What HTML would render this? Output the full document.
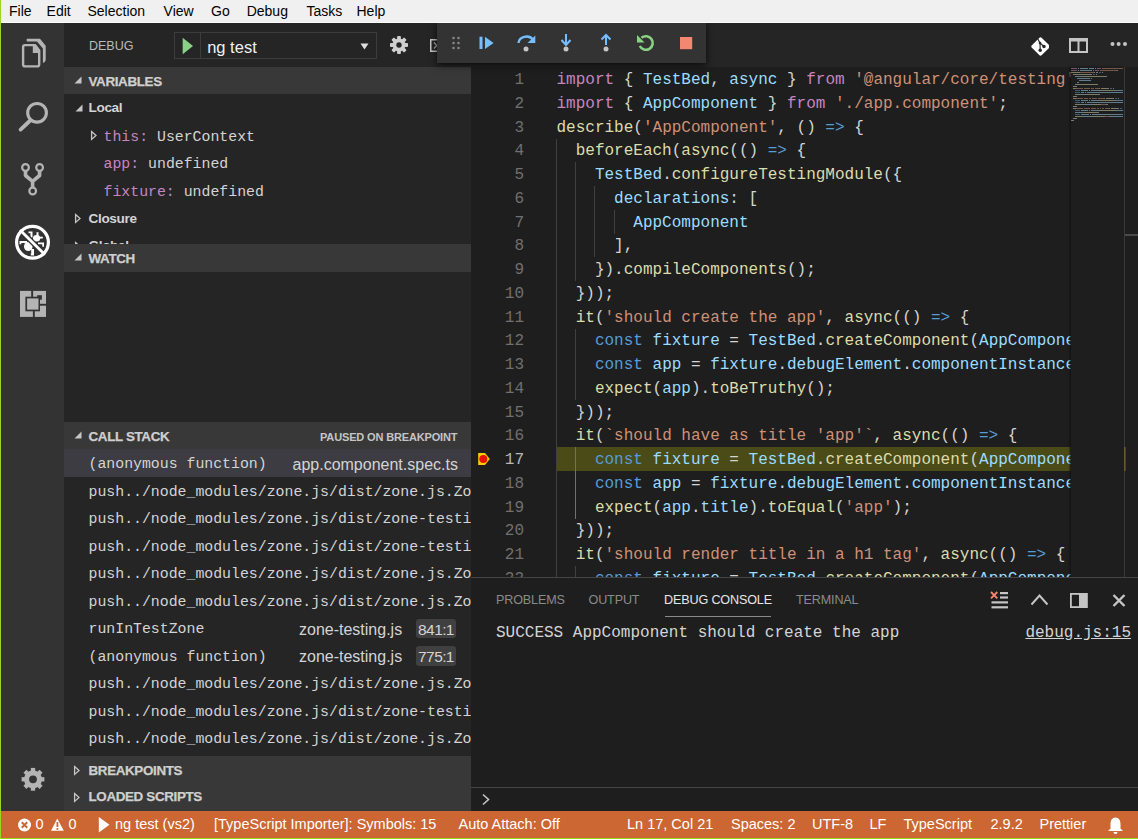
<!DOCTYPE html>
<html><head><meta charset="utf-8">
<style>
*{margin:0;padding:0;box-sizing:border-box}
html,body{width:1138px;height:839px;overflow:hidden;background:#1e1e1e;font-family:"Liberation Sans",sans-serif}
.a{position:absolute}
#menubar{left:0;top:0;width:1138px;height:22px;background:#f0f0f0;border-left:1px solid #97d71c}
#menuline{left:0;top:22px;width:1138px;height:1px;background:#fcfcfc}
.mi{position:absolute;top:3px;font-size:14px;color:#000;white-space:nowrap}
#actbar{left:0;top:23px;width:64px;height:788px;background:#333333;border-left:1px solid #97d71c}
#sidebar{left:64px;top:23px;width:407px;height:788px;background:#252526;overflow:hidden}
.sh{position:absolute;left:0;width:407px;height:27px;background:#383838}
.sht{position:absolute;left:24.5px;top:7px;font-size:13.4px;font-weight:bold;color:#cfcfcf;letter-spacing:-0.35px;-webkit-text-stroke:0.25px #cfcfcf;white-space:nowrap}
.tri{position:absolute}
.row{position:absolute;left:0;width:407px;height:27.5px}
.mono{font-family:"Liberation Mono",monospace;font-size:14.85px;white-space:nowrap}
.sans{font-family:"Liberation Sans",sans-serif;white-space:nowrap}
#titlearea{left:471px;top:23px;width:667px;height:44px;background:#252526}
#editor{left:471px;top:67px;width:667px;height:511px;background:#1e1e1e;overflow:hidden}
.cl{position:absolute;left:556.5px;height:23.75px;line-height:23.75px;padding-top:1.8px;font-family:"Liberation Mono",monospace;font-size:16px;white-space:pre}
.ln{position:absolute;left:471px;width:53px;text-align:right;height:23.75px;line-height:23.75px;font-family:"Liberation Mono",monospace;font-size:16px;color:#707070;padding-top:1.8px}
.ln.act{color:#b8b8b8}
.ig{position:absolute;width:1px;height:23.75px}
.mm{position:absolute;height:1px;opacity:0.5}
#panel{left:471px;top:577px;width:667px;height:234px;background:#1e1e1e;border-top:1px solid #454545}
.pt{position:absolute;top:15px;font-size:12.6px;color:#8b8b8b;white-space:nowrap;letter-spacing:-0.15px}
#status{left:0;top:811px;width:1138px;height:27px;background:#cc6633;color:#fff}
#bottomline{left:0;top:838px;width:1138px;height:1px;background:#97d71c}
.st{position:absolute;top:5px;font-size:14.5px;color:#fff;white-space:nowrap}
#dbgclip{left:400px;top:23px;width:350px;height:60px;overflow:hidden}
#dbgtb{left:37px;top:0px;width:269px;height:40px;background:#333333;box-shadow:0 2px 7px rgba(0,0,0,0.75)}
</style></head><body>
<!-- menu -->
<div id="menubar" class="a">
<span class="mi" style="left:8px">File</span>
<span class="mi" style="left:45.6px">Edit</span>
<span class="mi" style="left:86.5px">Selection</span>
<span class="mi" style="left:162.6px">View</span>
<span class="mi" style="left:210px">Go</span>
<span class="mi" style="left:245.7px">Debug</span>
<span class="mi" style="left:305.4px">Tasks</span>
<span class="mi" style="left:355.5px">Help</span>
</div>
<div id="menuline" class="a"></div>

<!-- activity bar -->
<div id="actbar" class="a">
<svg class="a" style="left:-1px;top:0" width="64" height="788" viewBox="0 23 64 788">
 <!-- files -->
 <g fill="none" stroke="#b4b4b4" stroke-width="2.4" stroke-linejoin="round">
  <path d="M23.1 47 Q23.1 45.1 25 45.1 H35 L39.2 50.5 V64.5 Q39.2 66.4 37.3 66.4 H25 Q23.1 66.4 23.1 64.5 Z"/>
 </g>
 <path d="M32.8 45 H35.5 L39.6 50 V53 H32.8 Z" fill="#b4b4b4"/>
 <path d="M27 38.75 Q26.2 39.5 26.9 41.5 H37 L42.9 48.5 V63 Q45.7 62 45.7 60 V45.8 L40 38.75 Z" fill="#b4b4b4"/>
 <!-- search -->
 <circle cx="37.05" cy="112.8" r="9.35" fill="none" stroke="#b4b4b4" stroke-width="3.1"/>
 <line x1="30.2" y1="120.5" x2="20.6" y2="129.6" stroke="#b4b4b4" stroke-width="3.8" stroke-linecap="round"/>
 <!-- git -->
 <g fill="none" stroke="#b4b4b4" stroke-width="2.2">
  <circle cx="25.5" cy="167.5" r="3.35"/>
  <circle cx="39.6" cy="167.5" r="3.35"/>
  <circle cx="32.7" cy="191" r="3.35"/>
 </g>
 <path d="M25.5 170.5 V175.5 L32.6 181.3 V188 M39.6 170.5 V175.5 L32.6 181.3" fill="none" stroke="#b4b4b4" stroke-width="3.6" stroke-linejoin="round"/>
 <!-- debug (active) -->
 <g fill="#fff">
  <ellipse cx="36.6" cy="238.3" rx="3.6" ry="3.3"/>
  <path d="M28.5 231.5 H32.5 V237.5 H30.5 V233.2 H28.5 Z"/>
  <rect x="36.5" y="232.2" width="2" height="5"/>
  <rect x="38" y="236.7" width="4.8" height="1.8"/>
  <path d="M38 242.5 H44 V246.8 H42.3 V244.3 H38 Z"/>
  <ellipse cx="28.3" cy="246.5" rx="4.3" ry="4.5"/>
  <path d="M19.5 241 H27 V243 H21.3 V244.2 H19.5 Z"/>
  <path d="M31.2 249 H34 V255.5 H30.8 V253.5 H31.2 Z"/>
 </g>
 <line x1="20" y1="230" x2="45" y2="254.8" stroke="#333333" stroke-width="5.4"/>
 <line x1="20" y1="230" x2="45" y2="254.8" stroke="#ffffff" stroke-width="2.8"/>
 <circle cx="32.5" cy="242.3" r="15.9" fill="none" stroke="#ffffff" stroke-width="3.2"/>
 <!-- extensions -->
 <rect x="20" y="290.9" width="26" height="26" fill="#b4b4b4"/>
 <g fill="#333333">
  <rect x="25.4" y="296.7" width="14.6" height="14.6"/>
  <rect x="31.2" y="290.5" width="1.9" height="6.5"/>
  <rect x="40" y="303.8" width="6.5" height="1.9"/>
  <rect x="32.9" y="311" width="1.9" height="6.5"/>
  <rect x="37.2" y="295.2" width="4.7" height="4.5"/>
 </g>
 <rect x="27.1" y="298.4" width="11.4" height="11.2" fill="#b4b4b4"/>
 <!-- gear -->
 <g transform="translate(33 779.3)" fill="#b4b4b4">
  <circle r="9" />
  <g>
   <rect x="-2.15" y="-11.4" width="4.3" height="5" />
   <rect x="-2.15" y="6.4" width="4.3" height="5" />
   <rect x="-11.4" y="-2.15" width="5" height="4.3" />
   <rect x="6.4" y="-2.15" width="5" height="4.3" />
  </g>
  <g transform="rotate(45)">
   <rect x="-2.15" y="-11.4" width="4.3" height="5" />
   <rect x="-2.15" y="6.4" width="4.3" height="5" />
   <rect x="-11.4" y="-2.15" width="5" height="4.3" />
   <rect x="6.4" y="-2.15" width="5" height="4.3" />
  </g>
  <circle r="3.9" fill="#333333"/>
 </g>
</svg>
</div>

<!-- sidebar -->
<div id="sidebar" class="a">
 <div class="a sans" style="left:25px;top:16px;font-size:12.5px;color:#bbbbbb">DEBUG</div>
 <div class="a" style="left:109.5px;top:8.5px;width:203px;height:27px;border:1px solid #3c3c3c;background:#252526"></div>
 <div class="a" style="left:136px;top:10px;width:1px;height:24.5px;background:#3c3c3c"></div>
 <svg class="a" style="left:118px;top:14px" width="12" height="18"><path d="M0.7 0.8 L11 8.9 L0.7 17.2 Z" fill="#89d185"/></svg>
 <div class="a sans" style="left:143.2px;top:14.5px;font-size:16.5px;color:#f0f0f0">ng test</div>
 <svg class="a" style="left:295.5px;top:20px" width="9" height="7"><path d="M0.5 0.5 H8.5 L4.5 6.5 Z" fill="#e0e0e0"/></svg>
 <!-- gear -->
 <svg class="a" style="left:323px;top:10px" width="24" height="24" viewBox="-12 -12 24 24">
  <g fill="#cfcfcf" transform="scale(0.9)">
   <circle r="7.2"/>
   <rect x="-2.1" y="-10" width="4.2" height="4.5" rx="1"/><rect x="-2.1" y="5.5" width="4.2" height="4.5" rx="1"/><rect x="-10" y="-2.1" width="4.5" height="4.2" rx="1"/><rect x="5.5" y="-2.1" width="4.5" height="4.2" rx="1"/>
   <g transform="rotate(45)"><rect x="-2.1" y="-10" width="4.2" height="4.5" rx="1"/><rect x="-2.1" y="5.5" width="4.2" height="4.5" rx="1"/><rect x="-10" y="-2.1" width="4.5" height="4.2" rx="1"/><rect x="5.5" y="-2.1" width="4.5" height="4.2" rx="1"/></g>
   <circle r="3" fill="#252526"/>
  </g>
 </svg>
 <svg class="a" style="left:365.5px;top:16px" width="12" height="14"><rect x="0.75" y="0.75" width="14" height="11.5" fill="none" stroke="#c5c5c5" stroke-width="1.5"/><path d="M4 3.5 l2.8 3 l-2.8 3" fill="none" stroke="#b0b0b0" stroke-width="1.2"/></svg>

 <!-- VARIABLES -->
 <div class="sh" style="top:44px">
  <svg class="tri" style="left:9.5px;top:9px" width="8" height="8"><path d="M7.5 0.5 V7.5 H0.5 Z" fill="#c5c5c5"/></svg>
  <div class="sht">VARIABLES</div>
 </div>
 <div class="row" style="top:71px">
  <svg class="tri" style="left:11px;top:10px" width="8" height="8"><path d="M7.5 0.5 V7.5 H0.5 Z" fill="#c5c5c5"/></svg>
  <div class="a sans" style="left:24.5px;top:6px;font-size:13.6px;font-weight:bold;color:#d4d4d4;letter-spacing:-0.35px">Local</div>
 </div>
 <div class="row" style="top:99px">
  <svg class="tri" style="left:26px;top:8px" width="8" height="11"><path d="M1.6 1.6 L6 5.5 L1.6 9.4 Z" fill="none" stroke="#c5c5c5" stroke-width="1.3"/></svg>
  <div class="a mono" style="left:39.5px;top:6.5px"><span style="color:#c586c0">this:</span> <span style="color:#d4d4d4">UserContext</span></div>
 </div>
 <div class="row" style="top:126.5px">
  <div class="a mono" style="left:39.5px;top:6.5px"><span style="color:#c586c0">app:</span> <span style="color:#d4d4d4">undefined</span></div>
 </div>
 <div class="row" style="top:154px">
  <div class="a mono" style="left:39.5px;top:6.5px"><span style="color:#c586c0">fixture:</span> <span style="color:#d4d4d4">undefined</span></div>
 </div>
 <div class="row" style="top:181.5px">
  <svg class="tri" style="left:9.8px;top:8.5px" width="8" height="11"><path d="M1.6 1.6 L6 5.5 L1.6 9.4 Z" fill="none" stroke="#c5c5c5" stroke-width="1.3"/></svg>
  <div class="a sans" style="left:24.5px;top:6px;font-size:13.6px;font-weight:bold;color:#d4d4d4;letter-spacing:-0.35px">Closure</div>
 </div>
 <div class="row" style="top:209px">
  <svg class="tri" style="left:9.8px;top:8.5px" width="8" height="11"><path d="M1.6 1.6 L6 5.5 L1.6 9.4 Z" fill="none" stroke="#c5c5c5" stroke-width="1.3"/></svg>
  <div class="a sans" style="left:24.5px;top:6px;font-size:13.6px;font-weight:bold;color:#d4d4d4;letter-spacing:-0.35px">Global</div>
 </div>
 <!-- WATCH -->
 <div class="sh" style="top:221px;height:28px">
  <svg class="tri" style="left:9.5px;top:9px" width="8" height="8"><path d="M7.5 0.5 V7.5 H0.5 Z" fill="#c5c5c5"/></svg>
  <div class="sht">WATCH</div>
 </div>
 <!-- CALL STACK -->
 <div class="sh" style="top:399px">
  <svg class="tri" style="left:9.5px;top:9px" width="8" height="8"><path d="M7.5 0.5 V7.5 H0.5 Z" fill="#c5c5c5"/></svg>
  <div class="sht">CALL STACK</div>
  <div class="a sans" style="left:256px;top:9px;font-size:11px;font-weight:bold;color:#c5c5c5;letter-spacing:-0.15px">PAUSED ON BREAKPOINT</div>
 </div>
 <div class="row" style="top:426px;background:#3c3c42">
  <div class="a mono" style="left:24.5px;top:7px;color:#d4d4d4">(anonymous function)</div>
  <div class="a sans" style="left:228.5px;top:6.5px;font-size:16px;color:#d4d4d4">app.component.spec.ts</div>
 </div>
 <div class="row" style="top:453.5px"><div class="a mono" style="left:24.5px;top:7px;color:#d4d4d4">push../node_modules/zone.js/dist/zone.js.ZoneDelegate.invoke</div></div>
 <div class="row" style="top:481px"><div class="a mono" style="left:24.5px;top:7px;color:#d4d4d4">push../node_modules/zone.js/dist/zone-testing.js.ProxyZoneSpec.onInvoke</div></div>
 <div class="row" style="top:508.5px"><div class="a mono" style="left:24.5px;top:7px;color:#d4d4d4">push../node_modules/zone.js/dist/zone-testing.js.AsyncTestZoneSpec.onInvoke</div></div>
 <div class="row" style="top:536px"><div class="a mono" style="left:24.5px;top:7px;color:#d4d4d4">push../node_modules/zone.js/dist/zone.js.ZoneDelegate.invoke</div></div>
 <div class="row" style="top:563.5px"><div class="a mono" style="left:24.5px;top:7px;color:#d4d4d4">push../node_modules/zone.js/dist/zone.js.Zone.run</div></div>
 <div class="row" style="top:591px">
  <div class="a mono" style="left:24.5px;top:7px;color:#d4d4d4">runInTestZone</div>
  <div class="a sans" style="left:235px;top:6.5px;font-size:16px;color:#d4d4d4">zone-testing.js</div>
  <div class="a sans" style="left:352px;top:4.5px;width:40px;height:19.7px;line-height:21px;text-align:center;background:#404040;border-radius:3px;font-size:15.5px;letter-spacing:-0.6px;color:#d4d4d4">841:1</div>
 </div>
 <div class="row" style="top:618.5px">
  <div class="a mono" style="left:24.5px;top:7px;color:#d4d4d4">(anonymous function)</div>
  <div class="a sans" style="left:235px;top:6.5px;font-size:16px;color:#d4d4d4">zone-testing.js</div>
  <div class="a sans" style="left:352px;top:4.5px;width:40px;height:19.7px;line-height:21px;text-align:center;background:#404040;border-radius:3px;font-size:15.5px;letter-spacing:-0.6px;color:#d4d4d4">775:1</div>
 </div>
 <div class="row" style="top:646px"><div class="a mono" style="left:24.5px;top:7px;color:#d4d4d4">push../node_modules/zone.js/dist/zone.js.ZoneDelegate.invoke</div></div>
 <div class="row" style="top:673.5px"><div class="a mono" style="left:24.5px;top:7px;color:#d4d4d4">push../node_modules/zone.js/dist/zone-testing.js.ProxyZoneSpec.onInvoke</div></div>
 <div class="row" style="top:701px"><div class="a mono" style="left:24.5px;top:7px;color:#d4d4d4">push../node_modules/zone.js/dist/zone.js.ZoneDelegate.invoke</div></div>
 <!-- BREAKPOINTS -->
 <div class="sh" style="top:733px;height:28px">
  <svg class="tri" style="left:8.8px;top:8.5px" width="8" height="11"><path d="M1.6 1.6 L6 5.5 L1.6 9.4 Z" fill="none" stroke="#c5c5c5" stroke-width="1.3"/></svg>
  <div class="sht">BREAKPOINTS</div>
 </div>
 <div class="sh" style="top:760.5px;height:28px">
  <svg class="tri" style="left:8.8px;top:8.5px" width="8" height="11"><path d="M1.6 1.6 L6 5.5 L1.6 9.4 Z" fill="none" stroke="#c5c5c5" stroke-width="1.3"/></svg>
  <div class="sht" style="top:5.8px">LOADED SCRIPTS</div>
 </div>
</div>

<!-- editor title area -->
<div id="titlearea" class="a">
 <!-- git compare icon -->
 <svg class="a" style="left:558px;top:13px" width="20" height="20" viewBox="1029 36 20 20">
  <path d="M1040.5 37.3 Q1041.2 37.3 1041.8 37.9 L1049.1 45.2 Q1049.7 45.8 1049.7 46.5 Q1049.7 47.2 1049.1 47.8 L1041.8 55.1 Q1041.2 55.7 1040.5 55.7 Q1039.8 55.7 1039.2 55.1 L1031.9 47.8 Q1031.3 47.2 1031.3 46.5 Q1031.3 45.8 1031.9 45.2 L1039.2 37.9 Q1039.8 37.3 1040.5 37.3 Z" fill="#ffffff"/>
  <path d="M1037.6 38.6 L1040 43 L1040.2 50.3 M1040 43 L1044 46.5" stroke="#252526" stroke-width="1.1" fill="none"/>
  <circle cx="1040" cy="43" r="1.3" fill="#252526"/>
  <circle cx="1040.2" cy="50.3" r="1.7" fill="#252526"/>
  <circle cx="1044" cy="46.5" r="1.7" fill="#252526"/>
 </svg>
 <!-- split -->
 <svg class="a" style="left:598px;top:15px" width="19" height="15"><rect x="1" y="1" width="17" height="13" fill="none" stroke="#c5c5c5" stroke-width="2"/><rect x="1" y="1" width="17" height="2.5" fill="#c5c5c5"/><rect x="8.5" y="1" width="2" height="13" fill="#c5c5c5"/></svg>
 <!-- more -->
 <svg class="a" style="left:638px;top:18px" width="20" height="6"><circle cx="3.5" cy="3" r="2" fill="#c5c5c5"/><circle cx="9.6" cy="3" r="2" fill="#c5c5c5"/><circle cx="16" cy="3" r="2" fill="#c5c5c5"/></svg>
</div>

<!-- editor -->
<div class="a" style="left:471px;top:67px;width:667px;height:511px;background:#1e1e1e"></div>
<div class="a" style="left:556px;top:447.25px;width:515px;height:23.75px;background:#4b4b18"></div>
<div class="ig" style="left:556.0px;top:138.50px;background:#404040"></div>
<div class="ig" style="left:556.0px;top:162.25px;background:#404040"></div>
<div class="ig" style="left:575.2px;top:162.25px;background:#404040"></div>
<div class="ig" style="left:556.0px;top:186.00px;background:#404040"></div>
<div class="ig" style="left:575.2px;top:186.00px;background:#404040"></div>
<div class="ig" style="left:594.4px;top:186.00px;background:#404040"></div>
<div class="ig" style="left:556.0px;top:209.75px;background:#404040"></div>
<div class="ig" style="left:575.2px;top:209.75px;background:#404040"></div>
<div class="ig" style="left:594.4px;top:209.75px;background:#404040"></div>
<div class="ig" style="left:613.6px;top:209.75px;background:#404040"></div>
<div class="ig" style="left:556.0px;top:233.50px;background:#404040"></div>
<div class="ig" style="left:575.2px;top:233.50px;background:#404040"></div>
<div class="ig" style="left:594.4px;top:233.50px;background:#404040"></div>
<div class="ig" style="left:556.0px;top:257.25px;background:#404040"></div>
<div class="ig" style="left:575.2px;top:257.25px;background:#404040"></div>
<div class="ig" style="left:556.0px;top:281.00px;background:#404040"></div>
<div class="ig" style="left:556.0px;top:304.75px;background:#404040"></div>
<div class="ig" style="left:556.0px;top:328.50px;background:#404040"></div>
<div class="ig" style="left:575.2px;top:328.50px;background:#404040"></div>
<div class="ig" style="left:556.0px;top:352.25px;background:#404040"></div>
<div class="ig" style="left:575.2px;top:352.25px;background:#404040"></div>
<div class="ig" style="left:556.0px;top:376.00px;background:#404040"></div>
<div class="ig" style="left:575.2px;top:376.00px;background:#404040"></div>
<div class="ig" style="left:556.0px;top:399.75px;background:#404040"></div>
<div class="ig" style="left:556.0px;top:423.50px;background:#404040"></div>
<div class="ig" style="left:556.0px;top:447.25px;background:#404040"></div>
<div class="ig" style="left:575.2px;top:447.25px;background:#707070"></div>
<div class="ig" style="left:556.0px;top:471.00px;background:#404040"></div>
<div class="ig" style="left:575.2px;top:471.00px;background:#707070"></div>
<div class="ig" style="left:556.0px;top:494.75px;background:#404040"></div>
<div class="ig" style="left:575.2px;top:494.75px;background:#707070"></div>
<div class="ig" style="left:556.0px;top:518.50px;background:#404040"></div>
<div class="ig" style="left:556.0px;top:542.25px;background:#404040"></div>
<div class="ig" style="left:556.0px;top:566.00px;background:#404040"></div>
<div class="ig" style="left:575.2px;top:566.00px;background:#404040"></div>
<div class="ln" style="top:67.25px">1</div>
<div class="ln" style="top:91.00px">2</div>
<div class="ln" style="top:114.75px">3</div>
<div class="ln" style="top:138.50px">4</div>
<div class="ln" style="top:162.25px">5</div>
<div class="ln" style="top:186.00px">6</div>
<div class="ln" style="top:209.75px">7</div>
<div class="ln" style="top:233.50px">8</div>
<div class="ln" style="top:257.25px">9</div>
<div class="ln" style="top:281.00px">10</div>
<div class="ln" style="top:304.75px">11</div>
<div class="ln" style="top:328.50px">12</div>
<div class="ln" style="top:352.25px">13</div>
<div class="ln" style="top:376.00px">14</div>
<div class="ln" style="top:399.75px">15</div>
<div class="ln" style="top:423.50px">16</div>
<div class="ln act" style="top:447.25px">17</div>
<div class="ln" style="top:471.00px">18</div>
<div class="ln" style="top:494.75px">19</div>
<div class="ln" style="top:518.50px">20</div>
<div class="ln" style="top:542.25px">21</div>
<div class="ln" style="top:566.00px">22</div>
<div class="a" style="left:471px;top:67px;width:600px;height:511px;overflow:hidden">
</div>
<div id="codewrap" class="a" style="left:0;top:0;width:1071px;height:578px;overflow:hidden">
<div class="cl" style="top:67.25px"><span style="color:#c586c0">import</span><span style="color:#d4d4d4"> { </span><span style="color:#9cdcfe">TestBed</span><span style="color:#d4d4d4">, </span><span style="color:#9cdcfe">async</span><span style="color:#d4d4d4"> } </span><span style="color:#c586c0">from</span><span style="color:#d4d4d4"> </span><span style="color:#ce9178">&#x27;@angular/core/testing&#x27;</span><span style="color:#d4d4d4">;</span></div>
<div class="cl" style="top:91.00px"><span style="color:#c586c0">import</span><span style="color:#d4d4d4"> { </span><span style="color:#9cdcfe">AppComponent</span><span style="color:#d4d4d4"> } </span><span style="color:#c586c0">from</span><span style="color:#d4d4d4"> </span><span style="color:#ce9178">&#x27;./app.component&#x27;</span><span style="color:#d4d4d4">;</span></div>
<div class="cl" style="top:114.75px"><span style="color:#dcdcaa">describe</span><span style="color:#d4d4d4">(</span><span style="color:#ce9178">&#x27;AppComponent&#x27;</span><span style="color:#d4d4d4">, () </span><span style="color:#569cd6">=&gt;</span><span style="color:#d4d4d4"> {</span></div>
<div class="cl" style="top:138.50px"><span style="color:#d4d4d4">  </span><span style="color:#dcdcaa">beforeEach</span><span style="color:#d4d4d4">(</span><span style="color:#dcdcaa">async</span><span style="color:#d4d4d4">(() </span><span style="color:#569cd6">=&gt;</span><span style="color:#d4d4d4"> {</span></div>
<div class="cl" style="top:162.25px"><span style="color:#d4d4d4">    </span><span style="color:#9cdcfe">TestBed</span><span style="color:#d4d4d4">.</span><span style="color:#dcdcaa">configureTestingModule</span><span style="color:#d4d4d4">({</span></div>
<div class="cl" style="top:186.00px"><span style="color:#d4d4d4">      </span><span style="color:#9cdcfe">declarations</span><span style="color:#d4d4d4">: [</span></div>
<div class="cl" style="top:209.75px"><span style="color:#d4d4d4">        </span><span style="color:#9cdcfe">AppComponent</span></div>
<div class="cl" style="top:233.50px"><span style="color:#d4d4d4">      ],</span></div>
<div class="cl" style="top:257.25px"><span style="color:#d4d4d4">    }).</span><span style="color:#dcdcaa">compileComponents</span><span style="color:#d4d4d4">();</span></div>
<div class="cl" style="top:281.00px"><span style="color:#d4d4d4">  }));</span></div>
<div class="cl" style="top:304.75px"><span style="color:#d4d4d4">  </span><span style="color:#dcdcaa">it</span><span style="color:#d4d4d4">(</span><span style="color:#ce9178">&#x27;should create the app&#x27;</span><span style="color:#d4d4d4">, </span><span style="color:#dcdcaa">async</span><span style="color:#d4d4d4">(() </span><span style="color:#569cd6">=&gt;</span><span style="color:#d4d4d4"> {</span></div>
<div class="cl" style="top:328.50px"><span style="color:#d4d4d4">    </span><span style="color:#569cd6">const</span><span style="color:#d4d4d4"> </span><span style="color:#9cdcfe">fixture</span><span style="color:#d4d4d4"> = </span><span style="color:#9cdcfe">TestBed</span><span style="color:#d4d4d4">.</span><span style="color:#dcdcaa">createComponent</span><span style="color:#d4d4d4">(</span><span style="color:#9cdcfe">AppComponent</span><span style="color:#d4d4d4">);</span></div>
<div class="cl" style="top:352.25px"><span style="color:#d4d4d4">    </span><span style="color:#569cd6">const</span><span style="color:#d4d4d4"> </span><span style="color:#9cdcfe">app</span><span style="color:#d4d4d4"> = </span><span style="color:#9cdcfe">fixture</span><span style="color:#d4d4d4">.</span><span style="color:#9cdcfe">debugElement</span><span style="color:#d4d4d4">.</span><span style="color:#9cdcfe">componentInstance</span><span style="color:#d4d4d4">;</span></div>
<div class="cl" style="top:376.00px"><span style="color:#d4d4d4">    </span><span style="color:#dcdcaa">expect</span><span style="color:#d4d4d4">(</span><span style="color:#9cdcfe">app</span><span style="color:#d4d4d4">).</span><span style="color:#dcdcaa">toBeTruthy</span><span style="color:#d4d4d4">();</span></div>
<div class="cl" style="top:399.75px"><span style="color:#d4d4d4">  }));</span></div>
<div class="cl" style="top:423.50px"><span style="color:#d4d4d4">  </span><span style="color:#dcdcaa">it</span><span style="color:#d4d4d4">(</span><span style="color:#ce9178">`should have as title &#x27;app&#x27;`</span><span style="color:#d4d4d4">, </span><span style="color:#dcdcaa">async</span><span style="color:#d4d4d4">(() </span><span style="color:#569cd6">=&gt;</span><span style="color:#d4d4d4"> {</span></div>
<div class="cl" style="top:447.25px"><span style="color:#d4d4d4">    </span><span style="color:#569cd6">const</span><span style="color:#d4d4d4"> </span><span style="color:#9cdcfe">fixture</span><span style="color:#d4d4d4"> = </span><span style="color:#9cdcfe">TestBed</span><span style="color:#d4d4d4">.</span><span style="color:#dcdcaa">createComponent</span><span style="color:#d4d4d4">(</span><span style="color:#9cdcfe">AppComponent</span><span style="color:#d4d4d4">);</span></div>
<div class="cl" style="top:471.00px"><span style="color:#d4d4d4">    </span><span style="color:#569cd6">const</span><span style="color:#d4d4d4"> </span><span style="color:#9cdcfe">app</span><span style="color:#d4d4d4"> = </span><span style="color:#9cdcfe">fixture</span><span style="color:#d4d4d4">.</span><span style="color:#9cdcfe">debugElement</span><span style="color:#d4d4d4">.</span><span style="color:#9cdcfe">componentInstance</span><span style="color:#d4d4d4">;</span></div>
<div class="cl" style="top:494.75px"><span style="color:#d4d4d4">    </span><span style="color:#dcdcaa">expect</span><span style="color:#d4d4d4">(</span><span style="color:#9cdcfe">app</span><span style="color:#d4d4d4">.</span><span style="color:#9cdcfe">title</span><span style="color:#d4d4d4">).</span><span style="color:#dcdcaa">toEqual</span><span style="color:#d4d4d4">(</span><span style="color:#ce9178">&#x27;app&#x27;</span><span style="color:#d4d4d4">);</span></div>
<div class="cl" style="top:518.50px"><span style="color:#d4d4d4">  }));</span></div>
<div class="cl" style="top:542.25px"><span style="color:#d4d4d4">  </span><span style="color:#dcdcaa">it</span><span style="color:#d4d4d4">(</span><span style="color:#ce9178">&#x27;should render title in a h1 tag&#x27;</span><span style="color:#d4d4d4">, </span><span style="color:#dcdcaa">async</span><span style="color:#d4d4d4">(() </span><span style="color:#569cd6">=&gt;</span><span style="color:#d4d4d4"> {</span></div>
<div class="cl" style="top:566.00px"><span style="color:#d4d4d4">    </span><span style="color:#569cd6">const</span><span style="color:#d4d4d4"> </span><span style="color:#9cdcfe">fixture</span><span style="color:#d4d4d4"> = </span><span style="color:#9cdcfe">TestBed</span><span style="color:#d4d4d4">.</span><span style="color:#dcdcaa">createComponent</span><span style="color:#d4d4d4">(</span><span style="color:#9cdcfe">AppComponent</span><span style="color:#d4d4d4">);</span></div>
</div>
<svg class="a" style="left:477px;top:452px" width="14" height="14"><path d="M1.2 0.9 H8 L12.8 6.9 L8 12.9 H1.2 Z" fill="#ffcc00"/><circle cx="6.3" cy="6.9" r="4" fill="#e51400"/></svg>
<!-- minimap -->
<div class="a" style="left:1071px;top:67px;width:53px;height:511px;background:#1e1e1e;box-shadow:-1px 0 2px #111"></div>
<div class="mm" style="left:1071px;top:68px;width:6px;background:#c586c0"></div>
<div class="mm" style="left:1078px;top:68px;width:1px;background:#d4d4d4"></div>
<div class="mm" style="left:1080px;top:68px;width:7px;background:#9cdcfe"></div>
<div class="mm" style="left:1087px;top:68px;width:1px;background:#d4d4d4"></div>
<div class="mm" style="left:1089px;top:68px;width:5px;background:#9cdcfe"></div>
<div class="mm" style="left:1095px;top:68px;width:1px;background:#d4d4d4"></div>
<div class="mm" style="left:1097px;top:68px;width:4px;background:#c586c0"></div>
<div class="mm" style="left:1102px;top:68px;width:21px;background:#ce9178"></div>
<div class="mm" style="left:1071px;top:70px;width:6px;background:#c586c0"></div>
<div class="mm" style="left:1078px;top:70px;width:1px;background:#d4d4d4"></div>
<div class="mm" style="left:1080px;top:70px;width:12px;background:#9cdcfe"></div>
<div class="mm" style="left:1093px;top:70px;width:1px;background:#d4d4d4"></div>
<div class="mm" style="left:1095px;top:70px;width:4px;background:#c586c0"></div>
<div class="mm" style="left:1100px;top:70px;width:17px;background:#ce9178"></div>
<div class="mm" style="left:1117px;top:70px;width:1px;background:#d4d4d4"></div>
<div class="mm" style="left:1071px;top:72px;width:8px;background:#dcdcaa"></div>
<div class="mm" style="left:1079px;top:72px;width:1px;background:#d4d4d4"></div>
<div class="mm" style="left:1080px;top:72px;width:14px;background:#ce9178"></div>
<div class="mm" style="left:1094px;top:72px;width:1px;background:#d4d4d4"></div>
<div class="mm" style="left:1096px;top:72px;width:2px;background:#d4d4d4"></div>
<div class="mm" style="left:1099px;top:72px;width:2px;background:#569cd6"></div>
<div class="mm" style="left:1102px;top:72px;width:1px;background:#d4d4d4"></div>
<div class="mm" style="left:1073px;top:74px;width:10px;background:#dcdcaa"></div>
<div class="mm" style="left:1083px;top:74px;width:1px;background:#d4d4d4"></div>
<div class="mm" style="left:1084px;top:74px;width:5px;background:#dcdcaa"></div>
<div class="mm" style="left:1089px;top:74px;width:3px;background:#d4d4d4"></div>
<div class="mm" style="left:1093px;top:74px;width:2px;background:#569cd6"></div>
<div class="mm" style="left:1096px;top:74px;width:1px;background:#d4d4d4"></div>
<div class="mm" style="left:1075px;top:76px;width:7px;background:#9cdcfe"></div>
<div class="mm" style="left:1082px;top:76px;width:1px;background:#d4d4d4"></div>
<div class="mm" style="left:1083px;top:76px;width:22px;background:#dcdcaa"></div>
<div class="mm" style="left:1105px;top:76px;width:2px;background:#d4d4d4"></div>
<div class="mm" style="left:1077px;top:78px;width:12px;background:#9cdcfe"></div>
<div class="mm" style="left:1089px;top:78px;width:1px;background:#d4d4d4"></div>
<div class="mm" style="left:1091px;top:78px;width:1px;background:#d4d4d4"></div>
<div class="mm" style="left:1079px;top:80px;width:12px;background:#9cdcfe"></div>
<div class="mm" style="left:1077px;top:82px;width:2px;background:#d4d4d4"></div>
<div class="mm" style="left:1075px;top:84px;width:3px;background:#d4d4d4"></div>
<div class="mm" style="left:1078px;top:84px;width:17px;background:#dcdcaa"></div>
<div class="mm" style="left:1095px;top:84px;width:3px;background:#d4d4d4"></div>
<div class="mm" style="left:1073px;top:86px;width:4px;background:#d4d4d4"></div>
<div class="mm" style="left:1073px;top:88px;width:2px;background:#dcdcaa"></div>
<div class="mm" style="left:1075px;top:88px;width:1px;background:#d4d4d4"></div>
<div class="mm" style="left:1076px;top:88px;width:7px;background:#ce9178"></div>
<div class="mm" style="left:1084px;top:88px;width:6px;background:#ce9178"></div>
<div class="mm" style="left:1091px;top:88px;width:3px;background:#ce9178"></div>
<div class="mm" style="left:1095px;top:88px;width:4px;background:#ce9178"></div>
<div class="mm" style="left:1099px;top:88px;width:1px;background:#d4d4d4"></div>
<div class="mm" style="left:1101px;top:88px;width:5px;background:#dcdcaa"></div>
<div class="mm" style="left:1106px;top:88px;width:3px;background:#d4d4d4"></div>
<div class="mm" style="left:1110px;top:88px;width:2px;background:#569cd6"></div>
<div class="mm" style="left:1113px;top:88px;width:1px;background:#d4d4d4"></div>
<div class="mm" style="left:1075px;top:90px;width:5px;background:#569cd6"></div>
<div class="mm" style="left:1081px;top:90px;width:7px;background:#9cdcfe"></div>
<div class="mm" style="left:1089px;top:90px;width:1px;background:#d4d4d4"></div>
<div class="mm" style="left:1091px;top:90px;width:7px;background:#9cdcfe"></div>
<div class="mm" style="left:1098px;top:90px;width:1px;background:#d4d4d4"></div>
<div class="mm" style="left:1099px;top:90px;width:15px;background:#dcdcaa"></div>
<div class="mm" style="left:1114px;top:90px;width:1px;background:#d4d4d4"></div>
<div class="mm" style="left:1115px;top:90px;width:8px;background:#9cdcfe"></div>
<div class="mm" style="left:1075px;top:92px;width:5px;background:#569cd6"></div>
<div class="mm" style="left:1081px;top:92px;width:3px;background:#9cdcfe"></div>
<div class="mm" style="left:1085px;top:92px;width:1px;background:#d4d4d4"></div>
<div class="mm" style="left:1087px;top:92px;width:7px;background:#9cdcfe"></div>
<div class="mm" style="left:1094px;top:92px;width:1px;background:#d4d4d4"></div>
<div class="mm" style="left:1095px;top:92px;width:12px;background:#9cdcfe"></div>
<div class="mm" style="left:1107px;top:92px;width:1px;background:#d4d4d4"></div>
<div class="mm" style="left:1108px;top:92px;width:15px;background:#9cdcfe"></div>
<div class="mm" style="left:1075px;top:94px;width:6px;background:#dcdcaa"></div>
<div class="mm" style="left:1081px;top:94px;width:1px;background:#d4d4d4"></div>
<div class="mm" style="left:1082px;top:94px;width:3px;background:#9cdcfe"></div>
<div class="mm" style="left:1085px;top:94px;width:2px;background:#d4d4d4"></div>
<div class="mm" style="left:1087px;top:94px;width:10px;background:#dcdcaa"></div>
<div class="mm" style="left:1097px;top:94px;width:3px;background:#d4d4d4"></div>
<div class="mm" style="left:1073px;top:96px;width:4px;background:#d4d4d4"></div>
<div class="mm" style="left:1073px;top:98px;width:2px;background:#dcdcaa"></div>
<div class="mm" style="left:1075px;top:98px;width:1px;background:#d4d4d4"></div>
<div class="mm" style="left:1076px;top:98px;width:7px;background:#ce9178"></div>
<div class="mm" style="left:1084px;top:98px;width:4px;background:#ce9178"></div>
<div class="mm" style="left:1089px;top:98px;width:2px;background:#ce9178"></div>
<div class="mm" style="left:1092px;top:98px;width:5px;background:#ce9178"></div>
<div class="mm" style="left:1098px;top:98px;width:6px;background:#ce9178"></div>
<div class="mm" style="left:1104px;top:98px;width:1px;background:#d4d4d4"></div>
<div class="mm" style="left:1106px;top:98px;width:5px;background:#dcdcaa"></div>
<div class="mm" style="left:1111px;top:98px;width:3px;background:#d4d4d4"></div>
<div class="mm" style="left:1115px;top:98px;width:2px;background:#569cd6"></div>
<div class="mm" style="left:1118px;top:98px;width:1px;background:#d4d4d4"></div>
<div class="mm" style="left:1075px;top:100px;width:5px;background:#569cd6"></div>
<div class="mm" style="left:1081px;top:100px;width:7px;background:#9cdcfe"></div>
<div class="mm" style="left:1089px;top:100px;width:1px;background:#d4d4d4"></div>
<div class="mm" style="left:1091px;top:100px;width:7px;background:#9cdcfe"></div>
<div class="mm" style="left:1098px;top:100px;width:1px;background:#d4d4d4"></div>
<div class="mm" style="left:1099px;top:100px;width:15px;background:#dcdcaa"></div>
<div class="mm" style="left:1114px;top:100px;width:1px;background:#d4d4d4"></div>
<div class="mm" style="left:1115px;top:100px;width:8px;background:#9cdcfe"></div>
<div class="mm" style="left:1075px;top:102px;width:5px;background:#569cd6"></div>
<div class="mm" style="left:1081px;top:102px;width:3px;background:#9cdcfe"></div>
<div class="mm" style="left:1085px;top:102px;width:1px;background:#d4d4d4"></div>
<div class="mm" style="left:1087px;top:102px;width:7px;background:#9cdcfe"></div>
<div class="mm" style="left:1094px;top:102px;width:1px;background:#d4d4d4"></div>
<div class="mm" style="left:1095px;top:102px;width:12px;background:#9cdcfe"></div>
<div class="mm" style="left:1107px;top:102px;width:1px;background:#d4d4d4"></div>
<div class="mm" style="left:1108px;top:102px;width:15px;background:#9cdcfe"></div>
<div class="mm" style="left:1075px;top:104px;width:6px;background:#dcdcaa"></div>
<div class="mm" style="left:1081px;top:104px;width:1px;background:#d4d4d4"></div>
<div class="mm" style="left:1082px;top:104px;width:3px;background:#9cdcfe"></div>
<div class="mm" style="left:1085px;top:104px;width:1px;background:#d4d4d4"></div>
<div class="mm" style="left:1086px;top:104px;width:5px;background:#9cdcfe"></div>
<div class="mm" style="left:1091px;top:104px;width:2px;background:#d4d4d4"></div>
<div class="mm" style="left:1093px;top:104px;width:7px;background:#dcdcaa"></div>
<div class="mm" style="left:1100px;top:104px;width:1px;background:#d4d4d4"></div>
<div class="mm" style="left:1101px;top:104px;width:5px;background:#ce9178"></div>
<div class="mm" style="left:1106px;top:104px;width:2px;background:#d4d4d4"></div>
<div class="mm" style="left:1073px;top:106px;width:4px;background:#d4d4d4"></div>
<div class="mm" style="left:1073px;top:108px;width:2px;background:#dcdcaa"></div>
<div class="mm" style="left:1075px;top:108px;width:1px;background:#d4d4d4"></div>
<div class="mm" style="left:1076px;top:108px;width:7px;background:#ce9178"></div>
<div class="mm" style="left:1084px;top:108px;width:6px;background:#ce9178"></div>
<div class="mm" style="left:1091px;top:108px;width:5px;background:#ce9178"></div>
<div class="mm" style="left:1097px;top:108px;width:2px;background:#ce9178"></div>
<div class="mm" style="left:1100px;top:108px;width:1px;background:#ce9178"></div>
<div class="mm" style="left:1102px;top:108px;width:2px;background:#ce9178"></div>
<div class="mm" style="left:1105px;top:108px;width:4px;background:#ce9178"></div>
<div class="mm" style="left:1109px;top:108px;width:1px;background:#d4d4d4"></div>
<div class="mm" style="left:1111px;top:108px;width:5px;background:#dcdcaa"></div>
<div class="mm" style="left:1116px;top:108px;width:3px;background:#d4d4d4"></div>
<div class="mm" style="left:1120px;top:108px;width:2px;background:#569cd6"></div>
<div class="mm" style="left:1075px;top:110px;width:5px;background:#569cd6"></div>
<div class="mm" style="left:1081px;top:110px;width:7px;background:#9cdcfe"></div>
<div class="mm" style="left:1089px;top:110px;width:1px;background:#d4d4d4"></div>
<div class="mm" style="left:1091px;top:110px;width:7px;background:#9cdcfe"></div>
<div class="mm" style="left:1098px;top:110px;width:1px;background:#d4d4d4"></div>
<div class="mm" style="left:1099px;top:110px;width:15px;background:#dcdcaa"></div>
<div class="mm" style="left:1114px;top:110px;width:1px;background:#d4d4d4"></div>
<div class="mm" style="left:1115px;top:110px;width:8px;background:#9cdcfe"></div>
<div class="mm" style="left:1075px;top:112px;width:7px;background:#9cdcfe"></div>
<div class="mm" style="left:1082px;top:112px;width:1px;background:#d4d4d4"></div>
<div class="mm" style="left:1083px;top:112px;width:13px;background:#dcdcaa"></div>
<div class="mm" style="left:1096px;top:112px;width:3px;background:#d4d4d4"></div>
<div class="mm" style="left:1075px;top:114px;width:5px;background:#569cd6"></div>
<div class="mm" style="left:1081px;top:114px;width:8px;background:#9cdcfe"></div>
<div class="mm" style="left:1090px;top:114px;width:1px;background:#d4d4d4"></div>
<div class="mm" style="left:1092px;top:114px;width:7px;background:#9cdcfe"></div>
<div class="mm" style="left:1099px;top:114px;width:1px;background:#d4d4d4"></div>
<div class="mm" style="left:1100px;top:114px;width:12px;background:#9cdcfe"></div>
<div class="mm" style="left:1112px;top:114px;width:1px;background:#d4d4d4"></div>
<div class="mm" style="left:1113px;top:114px;width:10px;background:#9cdcfe"></div>
<div class="mm" style="left:1075px;top:116px;width:6px;background:#dcdcaa"></div>
<div class="mm" style="left:1081px;top:116px;width:1px;background:#d4d4d4"></div>
<div class="mm" style="left:1082px;top:116px;width:8px;background:#9cdcfe"></div>
<div class="mm" style="left:1090px;top:116px;width:1px;background:#d4d4d4"></div>
<div class="mm" style="left:1091px;top:116px;width:13px;background:#dcdcaa"></div>
<div class="mm" style="left:1104px;top:116px;width:1px;background:#d4d4d4"></div>
<div class="mm" style="left:1105px;top:116px;width:4px;background:#ce9178"></div>
<div class="mm" style="left:1109px;top:116px;width:2px;background:#d4d4d4"></div>
<div class="mm" style="left:1111px;top:116px;width:11px;background:#9cdcfe"></div>
<div class="mm" style="left:1122px;top:116px;width:1px;background:#d4d4d4"></div>
<div class="mm" style="left:1073px;top:118px;width:4px;background:#d4d4d4"></div>
<div class="mm" style="left:1071px;top:120px;width:3px;background:#d4d4d4"></div>
<div class="a" style="left:1124px;top:67px;width:1px;height:511px;background:#3a3a3a"></div>
<div class="a" style="left:1125px;top:234px;width:13px;height:2px;background:#4a4a4a"></div>
<div class="a" style="left:1124px;top:447px;width:14px;height:24px;border-left:2px solid rgba(255,204,0,0.22)"></div>

<!-- debug toolbar -->
<div id="dbgclip" class="a"><div id="dbgtb" class="a">
 <svg width="269" height="40" viewBox="437 23 269 40">
  <g fill="#858585">
   <circle cx="453.5" cy="38" r="1.3"/><circle cx="458.5" cy="38" r="1.3"/>
   <circle cx="453.5" cy="43" r="1.3"/><circle cx="458.5" cy="43" r="1.3"/>
   <circle cx="453.5" cy="48" r="1.3"/><circle cx="458.5" cy="48" r="1.3"/>
  </g>
  <g fill="#75beff">
   <rect x="479.5" y="36.7" width="3" height="12.3"/>
   <path d="M485 36.7 L493.6 42.9 L485 49 Z"/>
  </g>
  <path d="M518.5 43 A8 7 0 0 1 533 39.5" fill="none" stroke="#75beff" stroke-width="2.4"/>
  <path d="M535.3 35.5 V43 H527.5 Z" fill="#75beff"/>
  <circle cx="526" cy="49" r="2.5" fill="#c5c5c5"/>
  <path d="M566 34 V44" stroke="#75beff" stroke-width="2"/>
  <path d="M561.5 40 L566 45 L570.5 40" fill="none" stroke="#75beff" stroke-width="2"/>
  <circle cx="566" cy="49" r="2.5" fill="#c5c5c5"/>
  <path d="M606 35 V45" stroke="#75beff" stroke-width="2"/>
  <path d="M601.5 39.5 L606 35 L610.5 39.5" fill="none" stroke="#75beff" stroke-width="2"/>
  <circle cx="606" cy="49" r="2.5" fill="#c5c5c5"/>
  <path d="M639.8 46 A6.8 6.8 0 1 0 641.5 37.8" fill="none" stroke="#89d185" stroke-width="2.6"/>
  <path d="M637 35 V42.6 H644.5 Z" fill="#89d185"/>
  <rect x="680" y="37" width="12.2" height="12.2" fill="#f48771"/>
 </svg>
</div></div>

<!-- panel -->
<div id="panel" class="a">
 <div class="pt" style="left:25px">PROBLEMS</div>
 <div class="pt" style="left:117.5px">OUTPUT</div>
 <div class="pt" style="left:193px;color:#e7e7e7">DEBUG CONSOLE</div>
 <div class="a" style="left:194px;top:38px;width:106px;height:1px;background:#8a8a8a"></div>
 <div class="pt" style="left:325px">TERMINAL</div>
 <svg class="a" style="left:519px;top:10px" width="20" height="22" viewBox="990 588 20 22">
  <g fill="#c5c5c5"><rect x="1000" y="592" width="8" height="2.2"/><rect x="1000" y="596.4" width="8" height="2.2"/><rect x="991.5" y="601.3" width="16.5" height="2.2"/><rect x="991.5" y="606.2" width="16.5" height="2.2"/></g>
  <path d="M991 592 L997.3 598.3 M997.3 592 L991 598.3" stroke="#f48771" stroke-width="1.8"/>
 </svg>
 <svg class="a" style="left:558.8px;top:15.3px" width="20" height="14"><path d="M1.5 11.5 L9.5 2.5 L17.5 11.5" fill="none" stroke="#c5c5c5" stroke-width="2"/></svg>
 <svg class="a" style="left:599px;top:14.5px" width="20" height="18"><rect x="0.9" y="0.9" width="16" height="13.2" fill="none" stroke="#c5c5c5" stroke-width="1.8"/><rect x="9" y="0.9" width="8" height="13.2" fill="#c5c5c5"/></svg>
 <svg class="a" style="left:640.8px;top:15.5px" width="16" height="14"><path d="M1.5 1 L12.5 12 M12.5 1 L1.5 12" stroke="#c5c5c5" stroke-width="2.4"/></svg>
 <div class="a mono" style="left:25px;top:46px;font-size:16px;color:#d4d4d4">SUCCESS AppComponent should create the app</div>
 <div class="a mono" style="left:554.4px;top:46px;font-size:16px;color:#d4d4d4;text-decoration:underline">debug.js:15</div>
 <div class="a" style="left:0;top:209px;width:667px;height:1px;background:#454545"></div>
 <svg class="a" style="left:10px;top:215px" width="10" height="14"><path d="M2 1.5 L7.5 6.5 L2 11.5" fill="none" stroke="#c5c5c5" stroke-width="1.6"/></svg>
</div>

<!-- status bar -->
<div id="status" class="a">
 <svg class="a" style="left:17px;top:6.5px" width="16" height="16"><circle cx="7.5" cy="7" r="6.5" fill="#fff"/><path d="M4.8 4.3 L10.2 9.7 M10.2 4.3 L4.8 9.7" stroke="#cc6633" stroke-width="2"/></svg>
 <div class="st" style="left:35.5px">0</div>
 <svg class="a" style="left:51px;top:7px" width="14" height="14"><path d="M6.3 0.5 L12.8 12.8 H0 Z" fill="#fff"/><rect x="5.5" y="4" width="1.8" height="5" fill="#cc6633"/><rect x="5.5" y="10" width="1.8" height="1.8" fill="#cc6633"/></svg>
 <div class="st" style="left:68.5px">0</div>
 <svg class="a" style="left:98px;top:6.3px" width="13" height="16"><path d="M0.8 0 L11.5 7.75 L0.8 15.5 Z" fill="#fff"/></svg>
 <div class="st" style="left:115px">ng test (vs2)</div>
 <div class="st" style="left:214px">[TypeScript Importer]: Symbols: 15</div>
 <div class="st" style="left:458.5px">Auto Attach: Off</div>
 <div class="st" style="left:627px">Ln 17, Col 21</div>
 <div class="st" style="left:731px">Spaces: 2</div>
 <div class="st" style="left:812px">UTF-8</div>
 <div class="st" style="left:869.5px">LF</div>
 <div class="st" style="left:903.5px">TypeScript</div>
 <div class="st" style="left:990.5px">2.9.2</div>
 <div class="st" style="left:1039.5px">Prettier</div>
 <svg class="a" style="left:1106px;top:6px" width="20" height="17"><path d="M9.5 0.5 C13 0.5 14.5 3.5 14.5 7 V11.5 L17 14 H2 L4.5 11.5 V7 C4.5 3.5 6 0.5 9.5 0.5 Z" fill="#fff"/><path d="M7.5 15 H11.5 A2 2 0 0 1 7.5 15 Z" fill="#fff"/></svg>
</div>
<div id="bottomline" class="a"></div>
<div class="a" style="left:0;top:0;width:1px;height:839px;background:#97d71c"></div>
</body></html>
